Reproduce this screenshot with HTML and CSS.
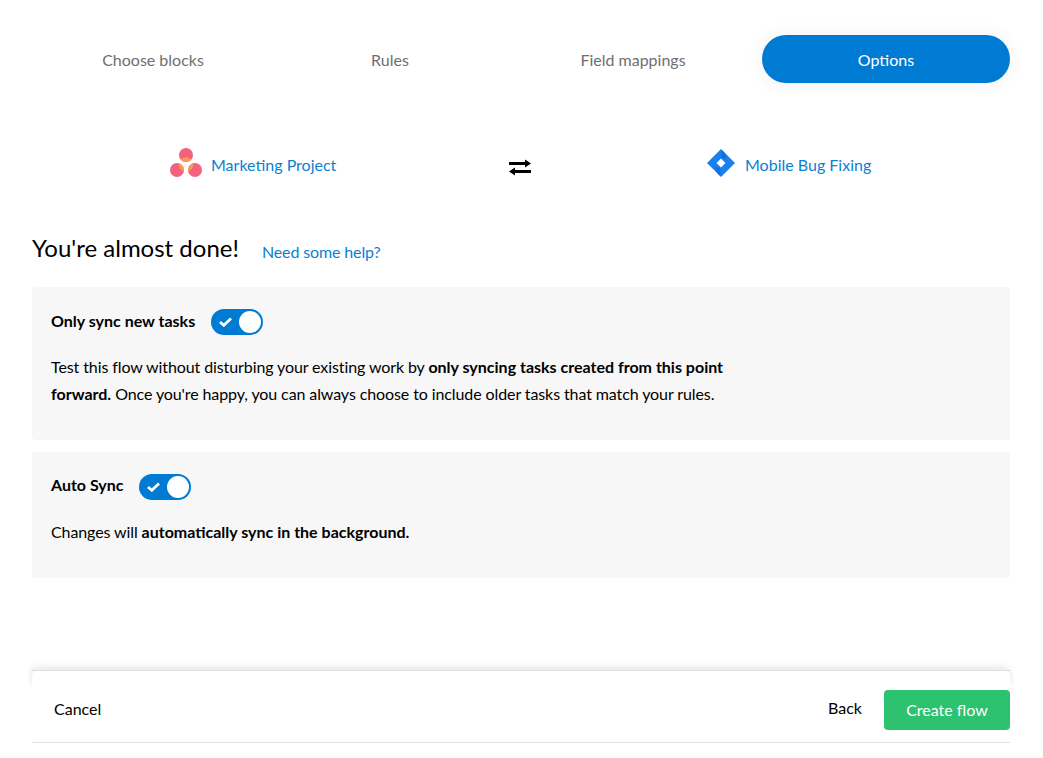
FILE: index.html
```html
<!DOCTYPE html>
<html lang="en">
<head>
<meta charset="utf-8">
<title>Create flow</title>
<link rel="stylesheet" href="styles.css">
</head>
<body>
<main class="page">
  <nav class="steps">
    <div class="step">Choose blocks</div>
    <div class="step">Rules</div>
    <div class="step">Field mappings</div>
    <div class="step step-active">Options</div>
  </nav>

  <section class="connection">
    <a class="project project-left">
      <svg class="icon-asana" viewBox="0 0 32 30" width="32" height="30" aria-hidden="true">
        <defs>
          <clipPath id="asana-dots">
            <circle cx="16" cy="7" r="7"/>
            <circle cx="7" cy="22" r="7"/>
            <circle cx="25" cy="22" r="7"/>
          </clipPath>
        </defs>
        <circle cx="16" cy="7" r="7" fill="#f4617f"/>
        <circle cx="7" cy="22" r="7" fill="#f4617f"/>
        <circle cx="25" cy="22" r="7" fill="#f4617f"/>
        <circle cx="16" cy="16.500" r="7.300" fill="#f89a55" clip-path="url(#asana-dots)"/>
      </svg>
      <span>Marketing Project</span>
    </a>
    <svg class="icon-swap" viewBox="0 0 22 17" width="22" height="17" aria-hidden="true">
      <path d="M0 4.500H18" stroke="#000" stroke-width="3" fill="none"/>
      <path d="M16 0.500L22 4.500L16 8.500z" fill="#000"/>
      <path d="M22 12.500H4" stroke="#000" stroke-width="3" fill="none"/>
      <path d="M6 8.500L0 12.500L6 16.500z" fill="#000"/>
    </svg>
    <a class="project project-right">
      <svg class="icon-jira" viewBox="0 0 28 28" width="28" height="28" aria-hidden="true">
        <path d="M14 0L28 14L14 28L0 14z" fill="#1a7ff0"/>
        <path d="M14.500 0.500L18 4L19.500 10L14.500 9z" fill="#1565c4" opacity="0.55"/>
        <path d="M13.500 27.500L10 24L8.500 18L13.500 19z" fill="#1565c4" opacity="0.55"/>
        <path d="M14 9.500L18.500 14L14 18.500L9.500 14z" fill="#fff"/>
      </svg>
      <span>Mobile Bug Fixing</span>
    </a>
  </section>

  <header class="intro">
    <h1>You're almost done!</h1>
    <a class="help">Need some help?</a>
  </header>

  <section class="card card-tall">
    <div class="card-head">
      <h2>Only sync new tasks</h2>
      <span class="toggle">
        <svg viewBox="0 0 13 10" width="13" height="10" aria-hidden="true"><path d="M1 5L4.800 8.300L12 1.500" stroke="#fff" stroke-width="2.800" fill="none"/></svg>
        <span class="knob"></span>
      </span>
    </div>
    <p>Test this flow without disturbing your existing work by <b>only syncing tasks created from this point forward.</b> Once you're happy, you can always choose to include older tasks that match your rules.</p>
  </section>

  <section class="card card-short">
    <div class="card-head card-head-raised">
      <h2>Auto Sync</h2>
      <span class="toggle">
        <svg viewBox="0 0 13 10" width="13" height="10" aria-hidden="true"><path d="M1 5L4.800 8.300L12 1.500" stroke="#fff" stroke-width="2.800" fill="none"/></svg>
        <span class="knob"></span>
      </span>
    </div>
    <p>Changes will <b>automatically sync in the background.</b></p>
  </section>

  <footer class="footer">
    <a class="cancel">Cancel</a>
    <div class="actions">
      <a class="back">Back</a>
      <button class="create" type="button">Create flow</button>
    </div>
  </footer>
</main>
</body>
</html>
```

FILE: styles.css
```css
* { box-sizing: border-box; }
html, body { margin: 0; padding: 0; background: #fff; }
body {
  font-family: Lato, "Liberation Sans", sans-serif;
  font-size: 16px;
  color: #000;
  height: 758px;
  overflow: hidden;
}
.page {
  width: 978px;
  margin-left: 32px;
  padding-top: 35px;
}
.steps {
  display: grid;
  grid-template-columns: 242px 232px 254px 1fr;
  height: 48px;
}
.step {
  display: flex;
  align-items: center;
  justify-content: center;
  color: #6f6f6f;
}
.step-active {
  margin-left: 2px;
  background: #007bd3;
  color: #fff;
  border-radius: 24px;
  box-shadow: 0 0 14px 6px rgba(0, 0, 0, 0.03);
}
.connection {
  display: grid;
  grid-template-columns: 477px 22px 1fr;
  align-items: center;
  height: 34px;
  margin-top: 64px;
}
.project {
  display: flex;
  align-items: center;
  color: #0a7fd6;
}
.project-left { padding-left: 138px; gap: 9px; }
.project-right { padding-left: 176px; gap: 10px; }
.icon-asana, .icon-jira, .icon-swap { display: block; flex: none; }
.icon-asana, .icon-jira { margin-bottom: 2px; }
.icon-swap { margin-top: 7px; }
.intro {
  display: flex;
  align-items: center;
  margin-top: 49px;
}
h1 {
  margin: 0;
  font-size: 24px;
  font-weight: 400;
  line-height: 36px;
}
.help {
  margin: 6px 0 0 23px;
  color: #0a7fd6;
  letter-spacing: -0.13px;
}
.card {
  background: #f7f7f7;
  border-radius: 4px;
  padding: 22px 19px 0;
}
.card-tall { height: 153px; margin-top: 21px; }
.card-short { height: 126px; margin-top: 12px; }
.card-head {
  display: flex;
  align-items: center;
  gap: 16px;
  height: 26px;
}
h2 {
  margin: 0 0 4px;
  font-size: 16px;
  font-weight: 700;
}
.card-head-raised h2 { margin-bottom: 6px; }
.toggle {
  display: flex;
  align-items: center;
  justify-content: space-between;
  width: 52px;
  height: 26px;
  padding: 0 2px 0 8px;
  background: #007bd3;
  border-radius: 13px;
}
.knob {
  display: block;
  width: 22px;
  height: 22px;
  border-radius: 50%;
  background: #fff;
}
.card p {
  margin: 18px 0 0;
  max-width: 700px;
  line-height: 27px;
  letter-spacing: -0.1px;
}
.card p b { letter-spacing: 0; }
.footer {
  position: relative;
  display: flex;
  align-items: center;
  justify-content: space-between;
  height: 73px;
  margin-top: 92px;
  padding: 6px 0 0 22px;
  background: #fff;
  border-top: 1px solid #e2e2e2;
  border-bottom: 1px solid #e2e2e2;
}
.footer::before {
  content: "";
  position: absolute;
  left: 0;
  right: 0;
  top: -1px;
  height: 16px;
  border-radius: 6px 6px 0 0;
  box-shadow: 0 -2px 8px rgba(0, 0, 0, 0.12);
  clip-path: inset(-10px -4px 0 -4px);
}
.cancel { margin-bottom: 2px; }
.actions {
  display: flex;
  align-items: center;
  gap: 22px;
}
.back { margin-bottom: 4px; }
.create {
  width: 126px;
  height: 40px;
  border: 0;
  border-radius: 4px;
  background: #2dc26f;
  color: #fff;
  font-family: inherit;
  font-size: 16px;
}
```
